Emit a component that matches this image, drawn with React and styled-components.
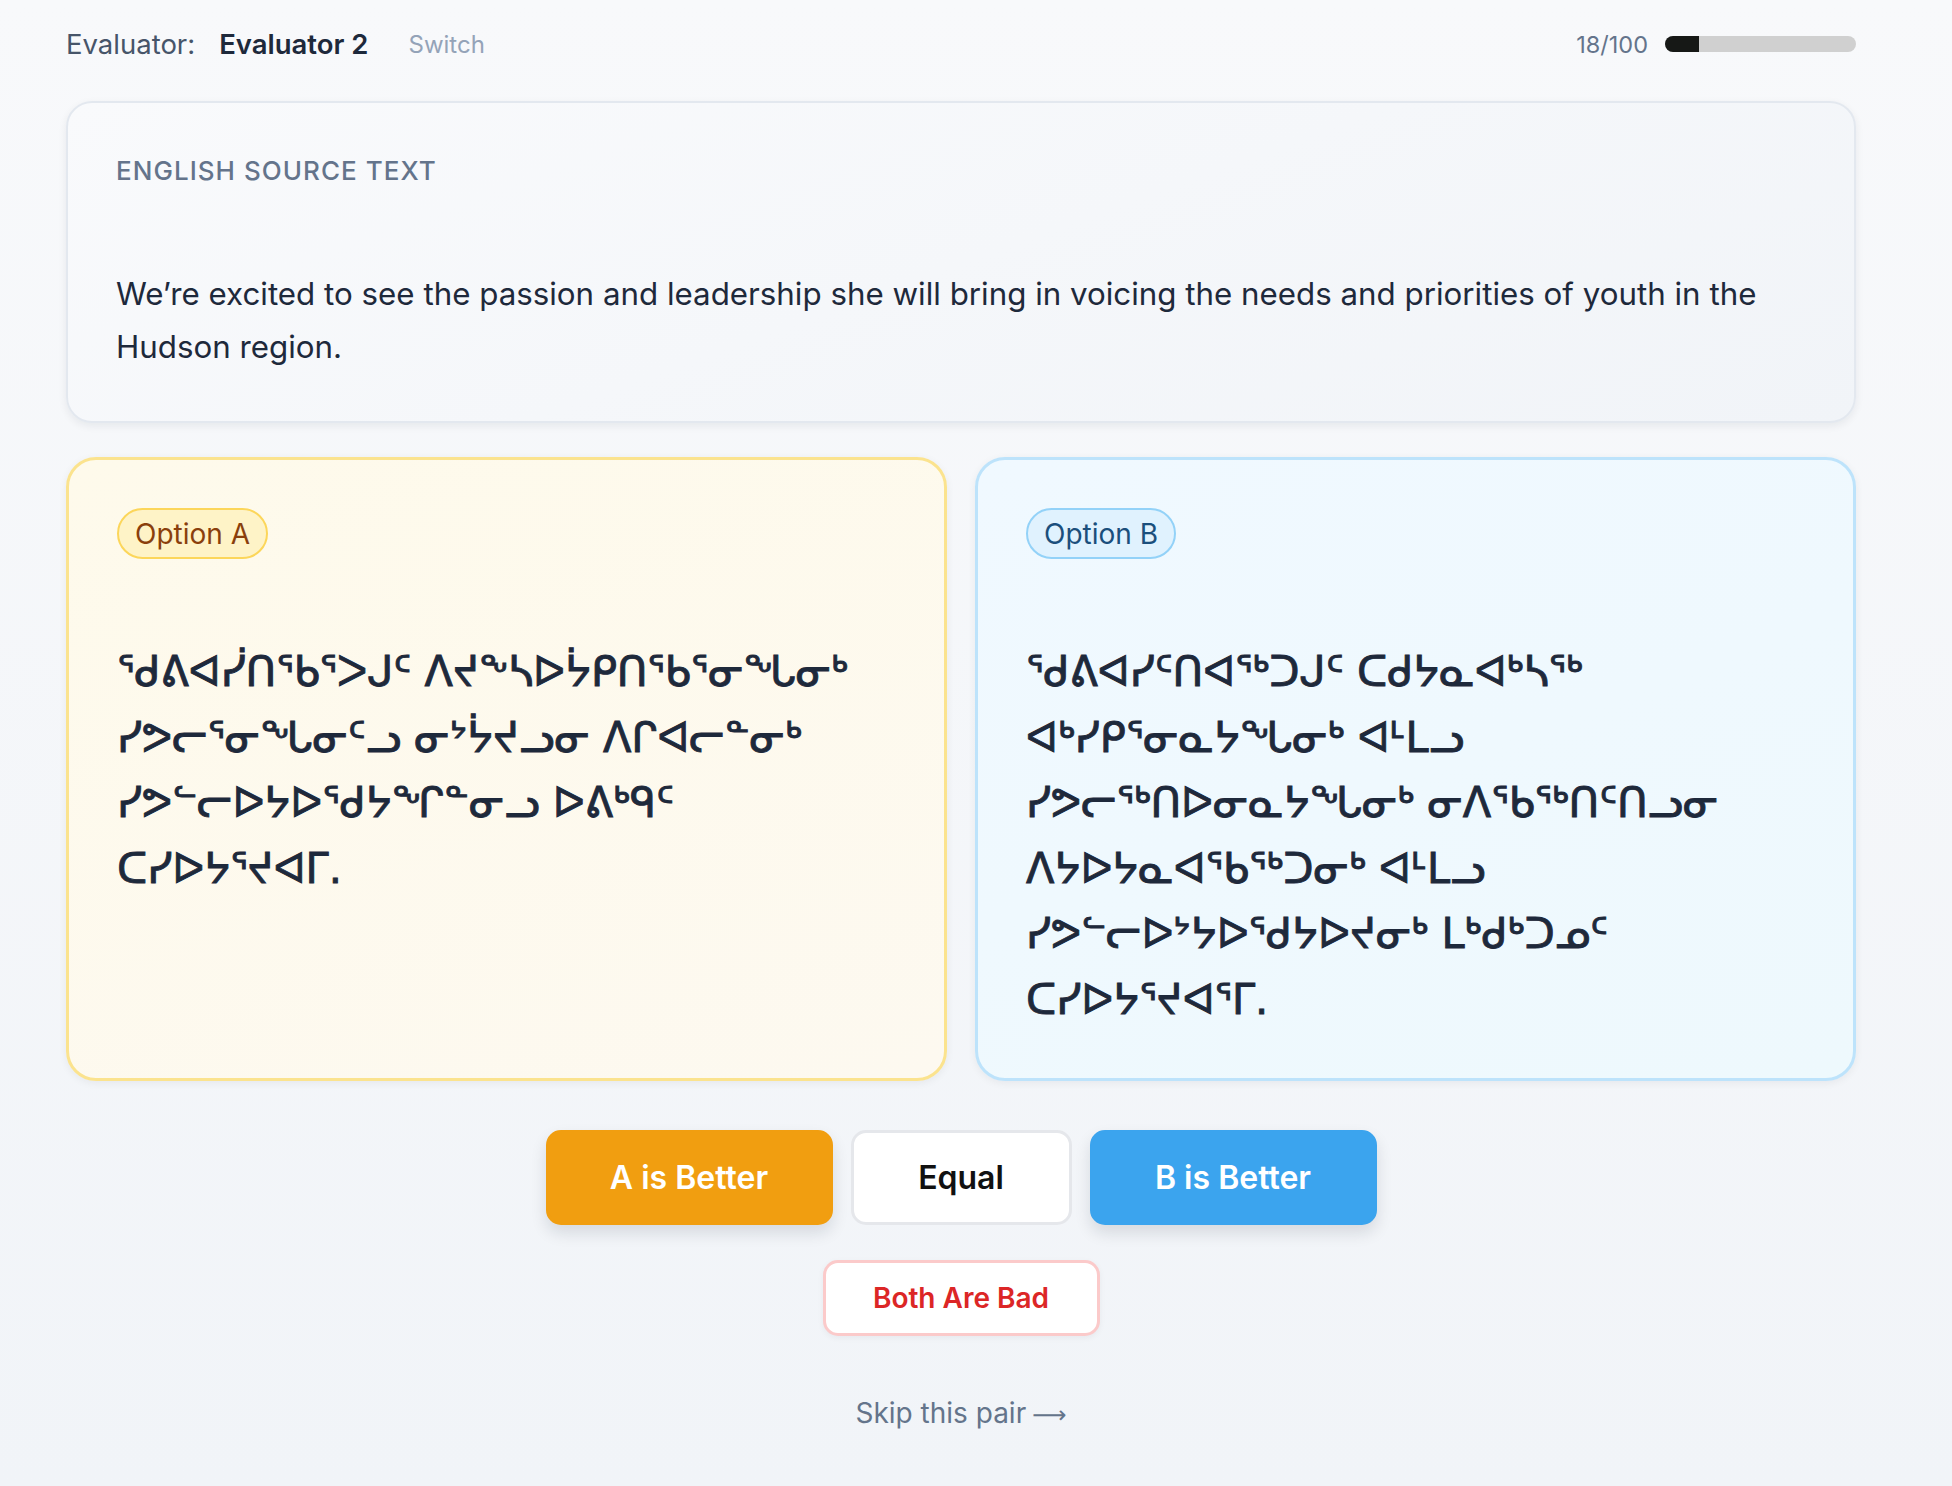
import React from "react";
import styled, { createGlobalStyle } from "styled-components";

const GlobalStyle = createGlobalStyle`
  html, body {
    margin: 0;
    padding: 0;
  }
  body {
    font-family: Inter, "Liberation Sans", sans-serif;
    background: linear-gradient(180deg, #f8f9fb 0%, #f1f4f8 100%);
    min-height: 1486px;
    color: #1e293b;
  }
`;

const Page = styled.div`
  width: 1790px;
  padding: 20px 0 40px 66px;
  display: flex;
  flex-direction: column;
`;

const TopBar = styled.header`
  height: 48px;
  display: flex;
  align-items: center;
  justify-content: space-between;
  margin-bottom: 33px;
`;

const EvaluatorInfo = styled.div`
  display: flex;
  align-items: center;
  gap: 24px;
`;

const EvalLabel = styled.span`
  font-size: 27.5px;
  color: #475569;
`;

const EvalName = styled.span`
  font-size: 27.5px;
  font-weight: 600;
  color: #1e293b;
  margin-right: 16px;
`;

const SwitchLink = styled.span`
  font-size: 24px;
  color: #94a3b8;
  cursor: pointer;
`;

const Progress = styled.div`
  display: flex;
  align-items: center;
  gap: 17px;
`;

const ProgressText = styled.span`
  font-size: 23.5px;
  color: #64748b;
`;

const Track = styled.div`
  width: 191px;
  height: 16px;
  border-radius: 8px;
  background: #d0d0d0;
  overflow: hidden;
`;

const Fill = styled.div`
  height: 100%;
  background: #161816;
`;

const SourceCard = styled.section`
  box-sizing: border-box;
  height: 322px;
  padding: 48px 48px;
  border: 2px solid #e3e8ef;
  border-radius: 26px;
  background: linear-gradient(160deg, #f9fafc 0%, #f1f4f8 100%);
  box-shadow: 0 3px 8px rgba(15, 23, 42, 0.07);
  margin-bottom: 34px;
`;

const SectionLabel = styled.div`
  font-size: 26px;
  font-weight: 500;
  letter-spacing: 0.04em;
  text-transform: uppercase;
  color: #64748b;
  line-height: 40px;
  margin-bottom: 77px;
`;

const SourceText = styled.p`
  margin: 0;
  font-size: 31.3px;
  line-height: 53px;
  color: #1e293b;
`;

const OptionsGrid = styled.div`
  display: grid;
  grid-template-columns: 1fr 1fr;
  gap: 28px;
  margin-bottom: 49px;
`;

const themes = {
  a: {
    border: "#fbe38e",
    bg: "linear-gradient(160deg, #fefaeb 0%, #fdf9f0 100%)",
    badgeBg: "#fef3c7",
    badgeBorder: "#fcd65a",
    badgeText: "#8a3f0c",
  },
  b: {
    border: "#bde3fb",
    bg: "linear-gradient(160deg, #f0f9ff 0%, #eef9fd 100%)",
    badgeBg: "#e0f2fe",
    badgeBorder: "#93d2f8",
    badgeText: "#1b4f7c",
  },
};

const OptionCard = styled.div`
  box-sizing: border-box;
  height: 624px;
  padding: 48px;
  border: 3px solid ${(p) => themes[p.$variant].border};
  border-radius: 30px;
  background: ${(p) => themes[p.$variant].bg};
  box-shadow: 0 2px 8px rgba(15, 23, 42, 0.06);
`;

const Badge = styled.span`
  display: inline-flex;
  align-items: center;
  box-sizing: border-box;
  height: 51px;
  padding: 0 16px;
  border-radius: 26px;
  border: 2px solid ${(p) => themes[p.$variant].badgeBorder};
  background: ${(p) => themes[p.$variant].badgeBg};
  color: ${(p) => themes[p.$variant].badgeText};
  font-size: 28px;
`;

const Syllabics = styled.p`
  margin: 80px 0 0;
  font-family: "DejaVu Sans", "Noto Sans", sans-serif;
  font-weight: 400;
  font-size: 41.5px;
  line-height: 65.5px;
  color: #1e293b;
  -webkit-text-stroke: 0.9px #1e293b;
`;

const ButtonRow = styled.div`
  display: flex;
  justify-content: center;
  gap: 18px;
  margin-bottom: 35px;
`;

const btn = {
  a: { bg: "#f19e10", color: "#ffffff", border: "#f19e10", width: "287px", shadow: "0 8px 16px rgba(15,23,42,0.12)" },
  eq: { bg: "#ffffff", color: "#111111", border: "#e5e7eb", width: "221px", shadow: "none" },
  b: { bg: "#3ba4ee", color: "#ffffff", border: "#3ba4ee", width: "287px", shadow: "0 8px 16px rgba(15,23,42,0.12)" },
};

const ChoiceButton = styled.button`
  box-sizing: border-box;
  width: ${(p) => btn[p.$kind].width};
  height: 95px;
  border-radius: 15px;
  border: 3px solid ${(p) => btn[p.$kind].border};
  background: ${(p) => btn[p.$kind].bg};
  color: ${(p) => btn[p.$kind].color};
  box-shadow: ${(p) => btn[p.$kind].shadow};
  font-family: Inter, "Liberation Sans", sans-serif;
  font-size: 32px;
  font-weight: 600;
  cursor: pointer;
`;

const BadButton = styled.button`
  align-self: center;
  box-sizing: border-box;
  width: 277px;
  height: 76px;
  border-radius: 15px;
  border: 3px solid #fbcaca;
  background: #ffffff;
  color: #dc2626;
  font-family: Inter, "Liberation Sans", sans-serif;
  font-size: 28px;
  font-weight: 600;
  box-shadow: 0 2px 6px rgba(15, 23, 42, 0.05);
  cursor: pointer;
  margin-bottom: 60px;
`;

const SkipLink = styled.span`
  align-self: center;
  font-size: 28px;
  color: #64748b;
  cursor: pointer;
`;

const Arrow = styled.span`
  font-family: "DejaVu Sans", sans-serif;
  font-size: 24px;
  margin-left: 6px;
`;

const optionA =
  "ᖁᕕᐊᓰᑎᖃᕐᐳᒍᑦ ᐱᔪᖕᓴᐅᔮᑭᑎᖃᕐᓂᖓᓂᒃ ᓯᕗᓕᕐᓂᖓᓂᑦᓗ ᓂᔾᔮᔪᓗᓂ ᐱᒋᐊᓕᓐᓂᒃ ᓯᕗᓪᓕᐅᔭᐅᖁᔭᖏᓐᓂᓗ ᐅᕕᒃᑫᑦ ᑕᓯᐅᔭᕐᔪᐊᒥ.";
const optionB =
  "ᖁᕕᐊᓯᑦᑎᐊᖅᑐᒍᑦ ᑕᑯᔭᓇᐊᒃᓴᖅ ᐊᒃᓯᑭᕐᓂᓇᔭᖓᓂᒃ ᐊᒻᒪᓗ ᓯᕗᓕᖅᑎᐅᓂᓇᔭᖓᓂᒃ ᓂᐱᖃᖅᑎᑦᑎᓗᓂ ᐱᔭᐅᔭᓇᐊᖃᖅᑐᓂᒃ ᐊᒻᒪᓗ ᓯᕗᓪᓕᐅᔾᔭᐅᖁᔭᐅᔪᓂᒃ ᒪᒃᑯᒃᑐᓄᑦ ᑕᓯᐅᔭᕐᔪᐊᕐᒥ.";

export default function App() {
  const done = 18;
  const total = 100;
  return (
    <>
      <GlobalStyle />
      <Page>
        <TopBar>
          <EvaluatorInfo>
            <EvalLabel>Evaluator:</EvalLabel>
            <EvalName>Evaluator 2</EvalName>
            <SwitchLink>Switch</SwitchLink>
          </EvaluatorInfo>
          <Progress>
            <ProgressText>
              {done}/{total}
            </ProgressText>
            <Track>
              <Fill style={{ width: `${(done / total) * 100}%` }} />
            </Track>
          </Progress>
        </TopBar>

        <SourceCard>
          <SectionLabel>English Source Text</SectionLabel>
          <SourceText>
            We’re excited to see the passion and leadership she will bring in voicing the needs and
            priorities of youth in the Hudson region.
          </SourceText>
        </SourceCard>

        <OptionsGrid>
          <OptionCard $variant="a">
            <Badge $variant="a">Option A</Badge>
            <Syllabics>{optionA}</Syllabics>
          </OptionCard>
          <OptionCard $variant="b">
            <Badge $variant="b">Option B</Badge>
            <Syllabics>{optionB}</Syllabics>
          </OptionCard>
        </OptionsGrid>

        <ButtonRow>
          <ChoiceButton $kind="a">A is Better</ChoiceButton>
          <ChoiceButton $kind="eq">Equal</ChoiceButton>
          <ChoiceButton $kind="b">B is Better</ChoiceButton>
        </ButtonRow>

        <BadButton>Both Are Bad</BadButton>
        <SkipLink>
          Skip this pair<Arrow>⟶</Arrow>
        </SkipLink>
      </Page>
    </>
  );
}
